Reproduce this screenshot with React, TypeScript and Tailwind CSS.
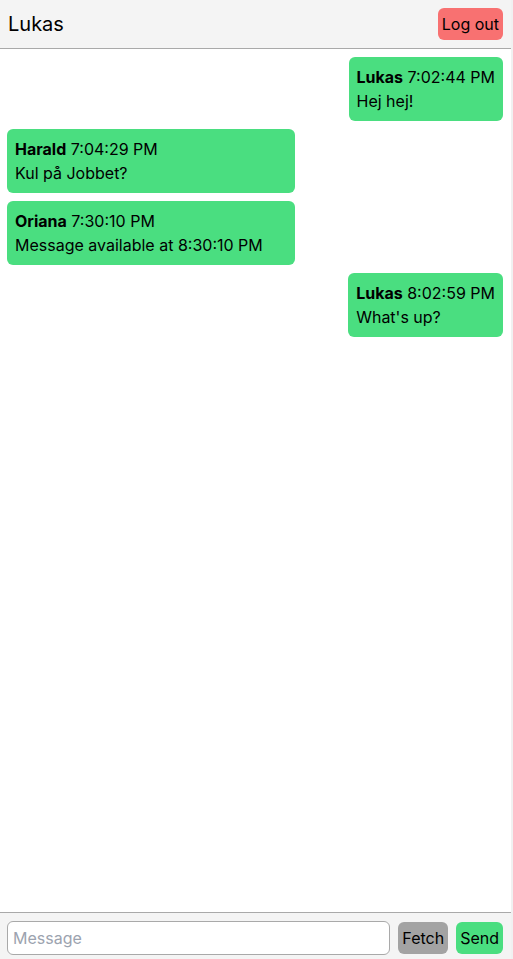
import React from "react";

type Msg = { user: string; time: string; text: string; mine: boolean };

const messages: Msg[] = [
  { user: "Lukas", time: "7:02:44 PM", text: "Hej hej!", mine: true },
  { user: "Harald", time: "7:04:29 PM", text: "Kul på Jobbet?", mine: false },
  { user: "Oriana", time: "7:30:10 PM", text: "Message available at 8:30:10 PM", mine: false },
  { user: "Lukas", time: "8:02:59 PM", text: "What's up?", mine: true },
];

export default function App() {
  return (
    <div
      className="flex h-screen w-full text-black"
      style={{ fontFamily: "Inter, 'Noto Sans', sans-serif" }}
    >
      <div className="flex min-w-0 flex-1 flex-col">
        <header className="flex h-[49px] shrink-0 items-center justify-between border-b border-[#a9a9a9] bg-[#f4f4f4] pl-2 pr-2">
          <span className="text-[20px] leading-7">Lukas</span>
          <button className="h-8 rounded-md bg-[#f87171] px-1 text-[16px] leading-6">Log out</button>
        </header>
        <main className="flex flex-1 flex-col gap-2 overflow-hidden bg-white pb-2 pl-[7px] pr-2 pt-2">
          {messages.map((m, i) => (
            <div key={i} className={m.mine ? "flex justify-end" : "flex justify-start"}>
              <div
                className={
                  "rounded-md bg-[#4ade80] p-2 text-[16px] leading-6 " +
                  (m.mine ? "" : "w-[288px]")
                }
              >
                <div>
                  <span className="font-bold">{m.user}</span> {m.time}
                </div>
                <div>{m.text}</div>
              </div>
            </div>
          ))}
        </main>
        <footer className="h-[47px] shrink-0 border-t border-[#a9a9a9] bg-[#f4f4f4] pl-[7px] pr-2 pt-2">
          <div className="flex h-[34px] items-center gap-2">
            <input
              className="h-[34px] min-w-0 flex-1 rounded-md border border-[#a9a9a9] bg-white px-[5px] text-[16px] outline-none placeholder:text-[#9ca3af]"
              placeholder="Message"
            />
            <button className="h-8 rounded-md bg-[#a3a3a3] px-1 text-[16px] leading-6">Fetch</button>
            <button className="h-8 rounded-md bg-[#4ade80] px-1 text-[16px] leading-6">Send</button>
          </div>
        </footer>
      </div>
      <div className="w-[2px] shrink-0 bg-[#f1f1f1]" />
    </div>
  );
}
